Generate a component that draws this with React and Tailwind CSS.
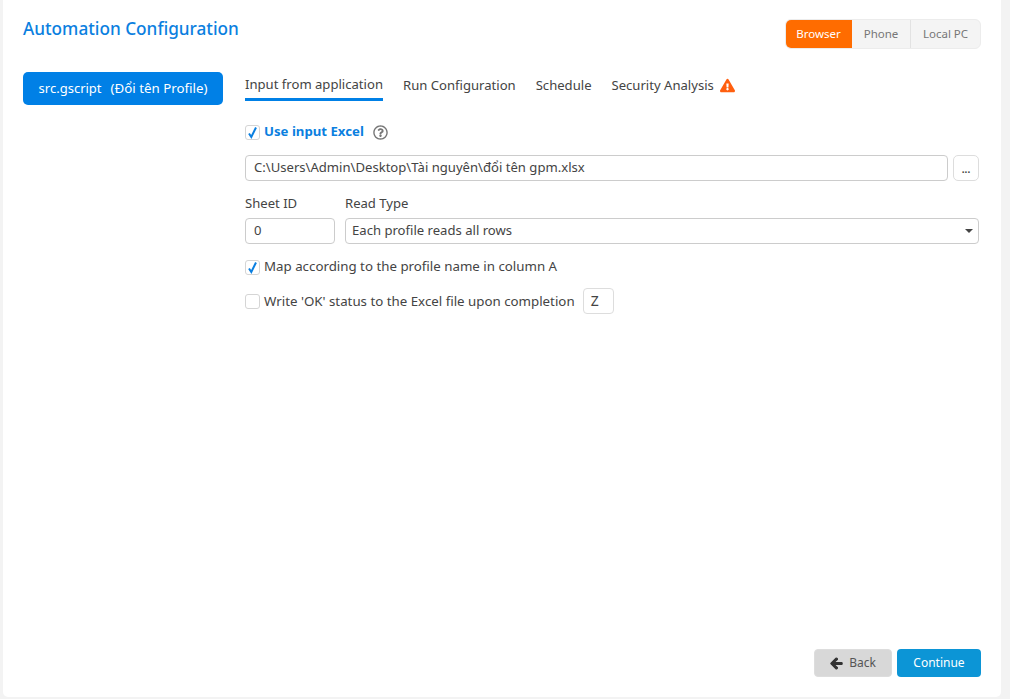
import { FaArrowLeft, FaExclamationTriangle, FaRegQuestionCircle } from "react-icons/fa";

function Check({ checked }) {
  return (
    <span className="w-[15px] h-[15px] shrink-0 rounded-[3px] border border-[#d5d5d5] bg-white flex items-center justify-center">
      {checked && (
        <svg width="11" height="13" viewBox="0 0 11 13">
          <path d="M2 7.5 L4.3 11 L9 1.5" fill="none" stroke="#0b7fe0" strokeWidth="2" />
        </svg>
      )}
    </span>
  );
}

const tabs = ["Run Configuration", "Schedule"];

export default function App() {
  return (
    <div className="w-[1010px] h-[699px] bg-[#f3f3f3] pl-[3px] pr-[9px] pb-[2px] overflow-hidden font-['Noto_Sans',sans-serif] text-[13.1px] text-[#444]">
      <div className="h-full bg-white rounded-b-[5px] pl-5 pr-5 flex flex-col">
        <div className="flex justify-between items-start pt-[17px] h-[72px]">
          <div className="text-[17.2px] leading-[24px] font-medium text-[#0b7fe0]">Automation Configuration</div>
          <div className="mt-[2px] h-[30px] flex rounded-[6px] border border-[#ececec] bg-[#f4f4f4] text-[11.5px] text-[#777] overflow-hidden">
            <div className="w-[67px] -ml-px bg-[#ff6c00] text-white flex items-center justify-center">Browser</div>
            <div className="w-[59px] border-r border-[#e2e2e2] flex items-center justify-center">Phone</div>
            <div className="w-[69px] flex items-center justify-center">Local PC</div>
          </div>
        </div>

        <div className="flex flex-1">
          <div className="w-[222px] shrink-0">
            <div className="w-[200px] h-[33px] rounded-[5px] bg-[#0080e6] text-white flex items-center justify-center gap-[9px] text-[13px]">
              <span>src.gscript</span>
              <span className="text-[13.3px]">(Đổi tên Profile)</span>
            </div>
          </div>

          <div className="flex-1">
            <div className="flex items-start gap-5 h-[40px] -mt-[1px]">
              <div className="h-[30px] leading-[26px] border-b-[3px] border-[#0080e6]">Input from application</div>
              {tabs.map((tab) => (
                <div key={tab} className="leading-[28px]">{tab}</div>
              ))}
              <div className="leading-[28px] flex items-center gap-[6px]">
                Security Analysis
                <FaExclamationTriangle className="text-[#ff5f0f] text-[15px]" />
              </div>
            </div>

            <div className="flex items-center h-[20px] mt-[11px]">
              <Check checked />
              <span className="ml-[4px] font-bold text-[13.2px] text-[#0b7fe0]">Use input Excel</span>
              <FaRegQuestionCircle className="ml-[9px] text-[15px] text-[#777]" />
            </div>

            <div className="flex gap-[5px] mt-[13px]">
              <div className="w-[703px] h-[26px] rounded-[4px] border border-[#ccc] px-2 flex items-center">
                C:\Users\Admin\Desktop\Tài nguyên\đổi tên gpm.xlsx
              </div>
              <div className="w-[26px] h-[26px] rounded-[5px] border border-[#ddd] flex items-center justify-center font-bold text-[10px] pt-[3px]">...</div>
            </div>

            <div className="flex gap-[10px] mt-[12px]">
              <div>
                <div className="h-[25px] leading-[20px]">Sheet ID</div>
                <div className="w-[90px] h-[26px] rounded-[4px] border border-[#ccc] px-2 flex items-center">0</div>
              </div>
              <div>
                <div className="h-[25px] leading-[20px]">Read Type</div>
                <div className="w-[634px] h-[26px] rounded-[4px] border border-[#ccc] pl-[6px] pr-[5px] flex items-center justify-between">
                  Each profile reads all rows
                  <span className="w-0 h-0 border-x-[4px] border-x-transparent border-t-[4px] border-t-[#444]"></span>
                </div>
              </div>
            </div>

            <div className="flex items-center gap-1 h-[20px] mt-[13px]">
              <Check checked />
              <span className="text-[13.3px]">Map according to the profile name in column A</span>
            </div>

            <div className="flex items-center h-[26px] mt-[11px]">
              <Check />
              <span className="ml-1 pt-[1px] text-[13.3px]">Write 'OK' status to the Excel file upon completion</span>
              <div className="ml-[8px] -mt-[1px] w-[31px] h-[26px] rounded-[4px] border border-[#ddd] pl-[7px] flex items-center text-[14px]">Z</div>
            </div>
          </div>
        </div>

        <div className="flex justify-end gap-[5px] pb-[20px]">
          <div className="w-[78px] h-[28px] rounded-[4px] border border-[#ddd] bg-[#d8d8d8] text-[12px] flex items-center justify-center gap-[6px] text-[#555]">
            <FaArrowLeft className="text-[13px] text-[#333]" stroke="currentColor" strokeWidth="40" />
            Back
          </div>
          <div className="w-[84px] h-[28px] rounded-[4px] bg-[#0c95d6] text-white flex items-center justify-center text-[12px]">Continue</div>
        </div>
      </div>
    </div>
  );
}
